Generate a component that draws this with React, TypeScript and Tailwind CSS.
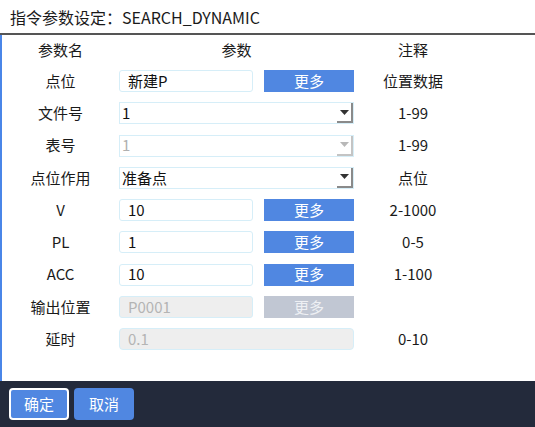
const font = { fontFamily: '"Noto Sans CJK SC", "Noto Sans", sans-serif' };

type Row = {
  label: string;
  kind: "input" | "select";
  value: string;
  more?: boolean;
  disabled?: boolean;
  moreDisabled?: boolean;
  wide?: boolean;
  note: string;
};

const rows: Row[] = [
  { label: "点位", kind: "input", value: "新建P", more: true, note: "位置数据" },
  { label: "文件号", kind: "select", value: "1", note: "1-99" },
  { label: "表号", kind: "select", value: "1", disabled: true, note: "1-99" },
  { label: "点位作用", kind: "select", value: "准备点", note: "点位" },
  { label: "V", kind: "input", value: "10", more: true, note: "2-1000" },
  { label: "PL", kind: "input", value: "1", more: true, note: "0-5" },
  { label: "ACC", kind: "input", value: "10", more: true, note: "1-100" },
  { label: "输出位置", kind: "input", value: "P0001", disabled: true, more: true, moreDisabled: true, note: "" },
  { label: "延时", kind: "input", value: "0.1", disabled: true, wide: true, note: "0-10" },
];

function Arrow({ disabled }: { disabled?: boolean }) {
  return (
    <div
      className={[
        "flex h-[20px] w-[16px] items-center justify-center border-r-2 border-b-2",
        disabled ? "border-[#c4c4c4]" : "border-[#8a8a8a]",
      ].join(" ")}
    >
      <svg width="9" height="5" viewBox="0 0 9 5">
        <path d="M0 0h9L4.5 5z" fill={disabled ? "#b8b8b8" : "#333"} />
      </svg>
    </div>
  );
}

function Field({ row }: { row: Row }) {
  if (row.kind === "select") {
    return (
      <div className="flex h-[22px] w-[235px] items-center justify-between border border-[#d6eef8] bg-white pl-[2px]">
        <span className={row.disabled ? "text-[#b0b0b0]" : "text-[#111]"}>{row.value}</span>
        <Arrow disabled={row.disabled} />
      </div>
    );
  }
  return (
    <div className="flex items-center gap-[11px]">
      <div
        className={[
          "flex h-[22px] items-center border border-[#d6eef8] pl-[8px]",
          row.wide ? "w-[235px] rounded-[4px]" : "w-[134px] rounded-[3px]",
          row.disabled ? "bg-[#eeeeee] text-[#b4b4b4]" : "bg-white text-[#111]",
        ].join(" ")}
      >
        {row.value}
      </div>
      {row.more && (
        <div
          className={[
            "flex h-[22px] w-[90px] items-center justify-center",
            row.moreDisabled ? "bg-[#c1c7d3] text-[#eef0f4]" : "bg-[#5087e1] text-white",
          ].join(" ")}
        >
          更多
        </div>
      )}
    </div>
  );
}

export default function App() {
  return (
    <div className="flex h-[427px] w-[535px] flex-col bg-white text-[15px] text-[#1a1a1a]" style={font}>
      <div className="flex h-[35px] items-center border-b-2 border-[#555555] pl-[10px] text-[16px]">
        指令参数设定：SEARCH_DYNAMIC
      </div>
      <div className="flex-1 border-l-2 border-[#4a86e8]">
        <div className="grid h-[30px] grid-cols-[117px_235px_118px] items-center">
          <span className="text-center">参数名</span>
          <span className="text-center">参数</span>
          <span className="text-center">注释</span>
        </div>
        {rows.map((row) => (
          <div key={row.label} className="grid h-[32.25px] grid-cols-[117px_235px_118px] items-center">
            <span className="text-center">{row.label}</span>
            <Field row={row} />
            <span className="text-center">{row.note}</span>
          </div>
        ))}
      </div>
      <div className="flex h-[46px] items-center gap-[5px] bg-[#232a3b] pl-[9px]">
        <button className="h-[32px] w-[60px] rounded-[4px] border-2 border-white bg-[#5087e1] text-white">确定</button>
        <button className="h-[32px] w-[60px] rounded-[4px] bg-[#5087e1] text-white">取消</button>
      </div>
    </div>
  );
}
